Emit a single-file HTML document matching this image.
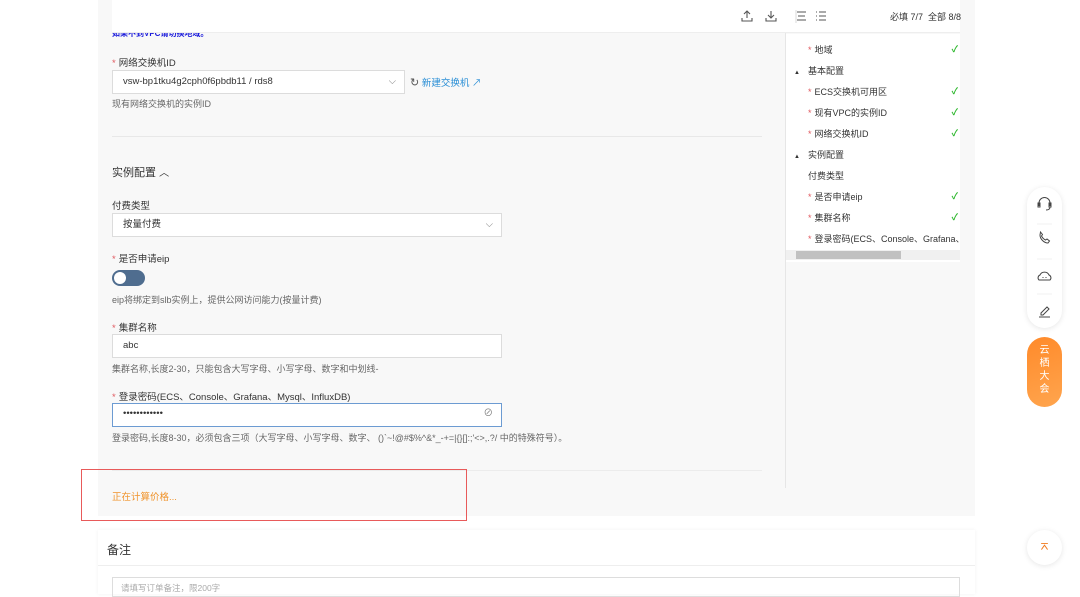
<!DOCTYPE html><html><head><meta charset="utf-8"><style>
*{box-sizing:border-box;margin:0;padding:0}
body{width:1080px;height:594px;overflow:hidden;background:#fff;font-family:"Liberation Sans","Noto Sans CJK SC",sans-serif;font-size:9px;color:#333;position:relative}
.a{position:absolute}
.g{background:#f8f8f8}
.lbl{font-size:9.5px;color:#333}
.st{color:#e0595f;margin-right:3px}
.inp{background:#fff;border:1px solid #dcdcdc;height:24px;font-size:9.5px;line-height:22px;padding-left:10px;color:#333}
.hint{font-size:9px;color:#666}
.side div{position:absolute;left:0;width:174px;font-size:9px;color:#333}
.ck{position:absolute;right:2px;top:-1px;color:#2eb82e;font-size:9px;font-weight:bold}
</style></head><body>
<div class="a g" style="left:98px;top:0;width:877px;height:516px"></div>
<div class="a" style="left:112px;top:0;width:848px;height:33px;background:#fff;border-bottom:1px solid #eee"></div>
<div class="a" style="left:112px;top:33px;font-size:8px;color:#1a1adb;height:5px;overflow:hidden;line-height:2px;font-weight:bold">如果不到VPC请切换地域。</div>
<svg class="a" style="left:740px;top:9px" width="100" height="14" fill="none" stroke="#555" stroke-width="1.1">
<path d="M7 2v7M4 5l3-3 3 3M2 9v3h10V9"/>
<path d="M31 2v7M28 6l3 3 3-3M26 9v3h10V9"/>
<path d="M56 1v13" stroke="#ddd"/>
<path d="M57 3h9M58 7h7M57 11h9"/>
<path d="M76 3h1M79 3h7M76 7h1M79 7h7M76 11h1M79 11h7"/>
</svg>
<div class="a" style="left:890px;top:10px;font-size:9px;color:#333">必填 7/7 &nbsp;全部 8/8</div>
<div class="a" style="left:785px;top:33px;width:1px;height:455px;background:#e6e6e6"></div>
<div class="a side" style="left:786px;top:34px;width:174px;height:228px;background:#fff">
<div style="top:9px;padding-left:22px"><span class="st">*</span>地域<span class="ck">✓</span></div>
<div style="top:30px;padding-left:8px"><span style="font-size:6px;margin-right:8px">▲</span>基本配置</div>
<div style="top:51px;padding-left:22px"><span class="st">*</span>ECS交换机可用区<span class="ck">✓</span></div>
<div style="top:72px;padding-left:22px"><span class="st">*</span>现有VPC的实例ID<span class="ck">✓</span></div>
<div style="top:93px;padding-left:22px"><span class="st">*</span>网络交换机ID<span class="ck">✓</span></div>
<div style="top:114px;padding-left:8px"><span style="font-size:6px;margin-right:8px">▲</span>实例配置</div>
<div style="top:135px;padding-left:22px">付费类型</div>
<div style="top:156px;padding-left:22px"><span class="st">*</span>是否申请eip<span class="ck">✓</span></div>
<div style="top:177px;padding-left:22px"><span class="st">*</span>集群名称<span class="ck">✓</span></div>
<div style="top:198px;padding-left:22px;white-space:nowrap;overflow:hidden"><span class="st">*</span>登录密码(ECS、Console、Grafana、</div>
<div style="top:216px;height:10px;background:#f0f0f0"></div>
<div style="top:217px;left:10px;width:105px;height:8px;background:#c1c1c1"></div>
</div>
<div class="a lbl" style="left:112px;top:55px"><span class="st">*</span>网络交换机ID</div>
<div class="a inp" style="left:112px;top:70px;width:293px">vsw-bp1tku4g2cph0f6pbdb11 / rds8<span style="position:absolute;right:8px;color:#888">⌵</span></div>
<div class="a" style="left:410px;top:75px;font-size:9.5px;color:#2b8fd6"><span style="color:#555;font-size:11px">↻</span> 新建交换机 ↗</div>
<div class="a hint" style="left:112px;top:97px">现有网络交换机的实例ID</div>
<div class="a" style="left:112px;top:136px;width:650px;height:1px;background:#e8e8e8"></div>
<div class="a" style="left:112px;top:164px;font-size:11px;color:#333">实例配置 <span style="font-size:10px">︿</span></div>
<div class="a lbl" style="left:112px;top:198px">付费类型</div>
<div class="a inp" style="left:112px;top:213px;width:390px">按量付费<span style="position:absolute;right:8px;color:#888">⌵</span></div>
<div class="a lbl" style="left:112px;top:251px"><span class="st">*</span>是否申请eip</div>
<div class="a" style="left:112px;top:270px;width:33px;height:16px;border-radius:8px;background:#4f6d8f"><div style="position:absolute;left:2px;top:2px;width:12px;height:12px;border-radius:50%;background:#fff"></div></div>
<div class="a hint" style="left:112px;top:293px">eip将绑定到slb实例上，提供公网访问能力(按量计费)</div>
<div class="a lbl" style="left:112px;top:320px"><span class="st">*</span>集群名称</div>
<div class="a inp" style="left:112px;top:334px;width:390px">abc</div>
<div class="a hint" style="left:112px;top:362px">集群名称,长度2-30，只能包含大写字母、小写字母、数字和中划线-</div>
<div class="a lbl" style="left:112px;top:389px"><span class="st">*</span>登录密码(ECS、Console、Grafana、Mysql、InfluxDB)</div>
<div class="a inp" style="left:112px;top:403px;width:390px;border-color:#6c9bd2;line-height:20px">••••••••••••<span style="position:absolute;right:8px;color:#777">⊘</span></div>
<div class="a hint" style="left:112px;top:431px">登录密码,长度8-30，必须包含三项（大写字母、小写字母、数字、 ()`~!@#$%^&amp;*_-+=|{}[]:;'&lt;&gt;,.?/ 中的特殊符号）。</div>
<div class="a" style="left:112px;top:470px;width:650px;height:1px;background:#ececec"></div>
<div class="a" style="left:81px;top:469px;width:386px;height:52px;border:1.5px solid #e85a5a"></div>
<div class="a" style="left:112px;top:489px;font-size:9.5px;color:#f0932b">正在计算价格...</div>
<div class="a" style="left:98px;top:530px;width:877px;height:64px;background:#fff;box-shadow:0 0 4px rgba(0,0,0,.06)"></div>
<div class="a" style="left:107px;top:541px;font-size:12px;color:#333">备注</div>
<div class="a" style="left:98px;top:565px;width:877px;height:1px;background:#eee"></div>
<div class="a" style="left:112px;top:577px;width:848px;height:20px;border:1px solid #ddd;padding:4px 8px;font-size:8.5px;color:#aaa">请填写订单备注，限200字</div>
<div class="a" style="left:1027px;top:187px;width:35px;height:141px;border-radius:18px;background:#fff;box-shadow:0 1px 6px rgba(0,0,0,.1)"></div>
<svg class="a" style="left:1027px;top:187px" width="35" height="141" fill="none" stroke="#444" stroke-width="1">
<path d="M12 19v-3a5.5 5.5 0 0 1 11 0v3M11 16h2v4h-2zM22 16h2v4h-2zM23 20q0 3-4 3"/>
<path d="M10 37h15M10 72h15M10 107h15" stroke="#f0f0f0"/>
<path d="M13 48c0 4 4 8 8 8l1.5-2-2.5-2-1.5 1c-2-1-3-2-4-4l1-1.5-2-2.5z"/>
<path d="M12 93a3 3 0 0 1 1-5 5 5 0 0 1 9 0 3 3 0 0 1 1 5z M16 90v1M19 90v1"/>
<path d="M12 130h11M14 126l6-6 2 2-6 6h-2z"/>
</svg>
<div class="a" style="left:1027px;top:337px;width:35px;height:70px;border-radius:18px;background:linear-gradient(160deg,#ff8a2a,#ffa54e);color:#fff;font-size:10px;text-align:center;line-height:13px;padding-top:7px">云<br>栖<br>大<br>会</div>
<div class="a" style="left:1027px;top:530px;width:35px;height:35px;border-radius:50%;background:#fff;box-shadow:0 1px 6px rgba(0,0,0,.1);color:#f07b1f;font-size:10px;text-align:center;line-height:35px;font-weight:bold">⌅</div>
</body></html>
